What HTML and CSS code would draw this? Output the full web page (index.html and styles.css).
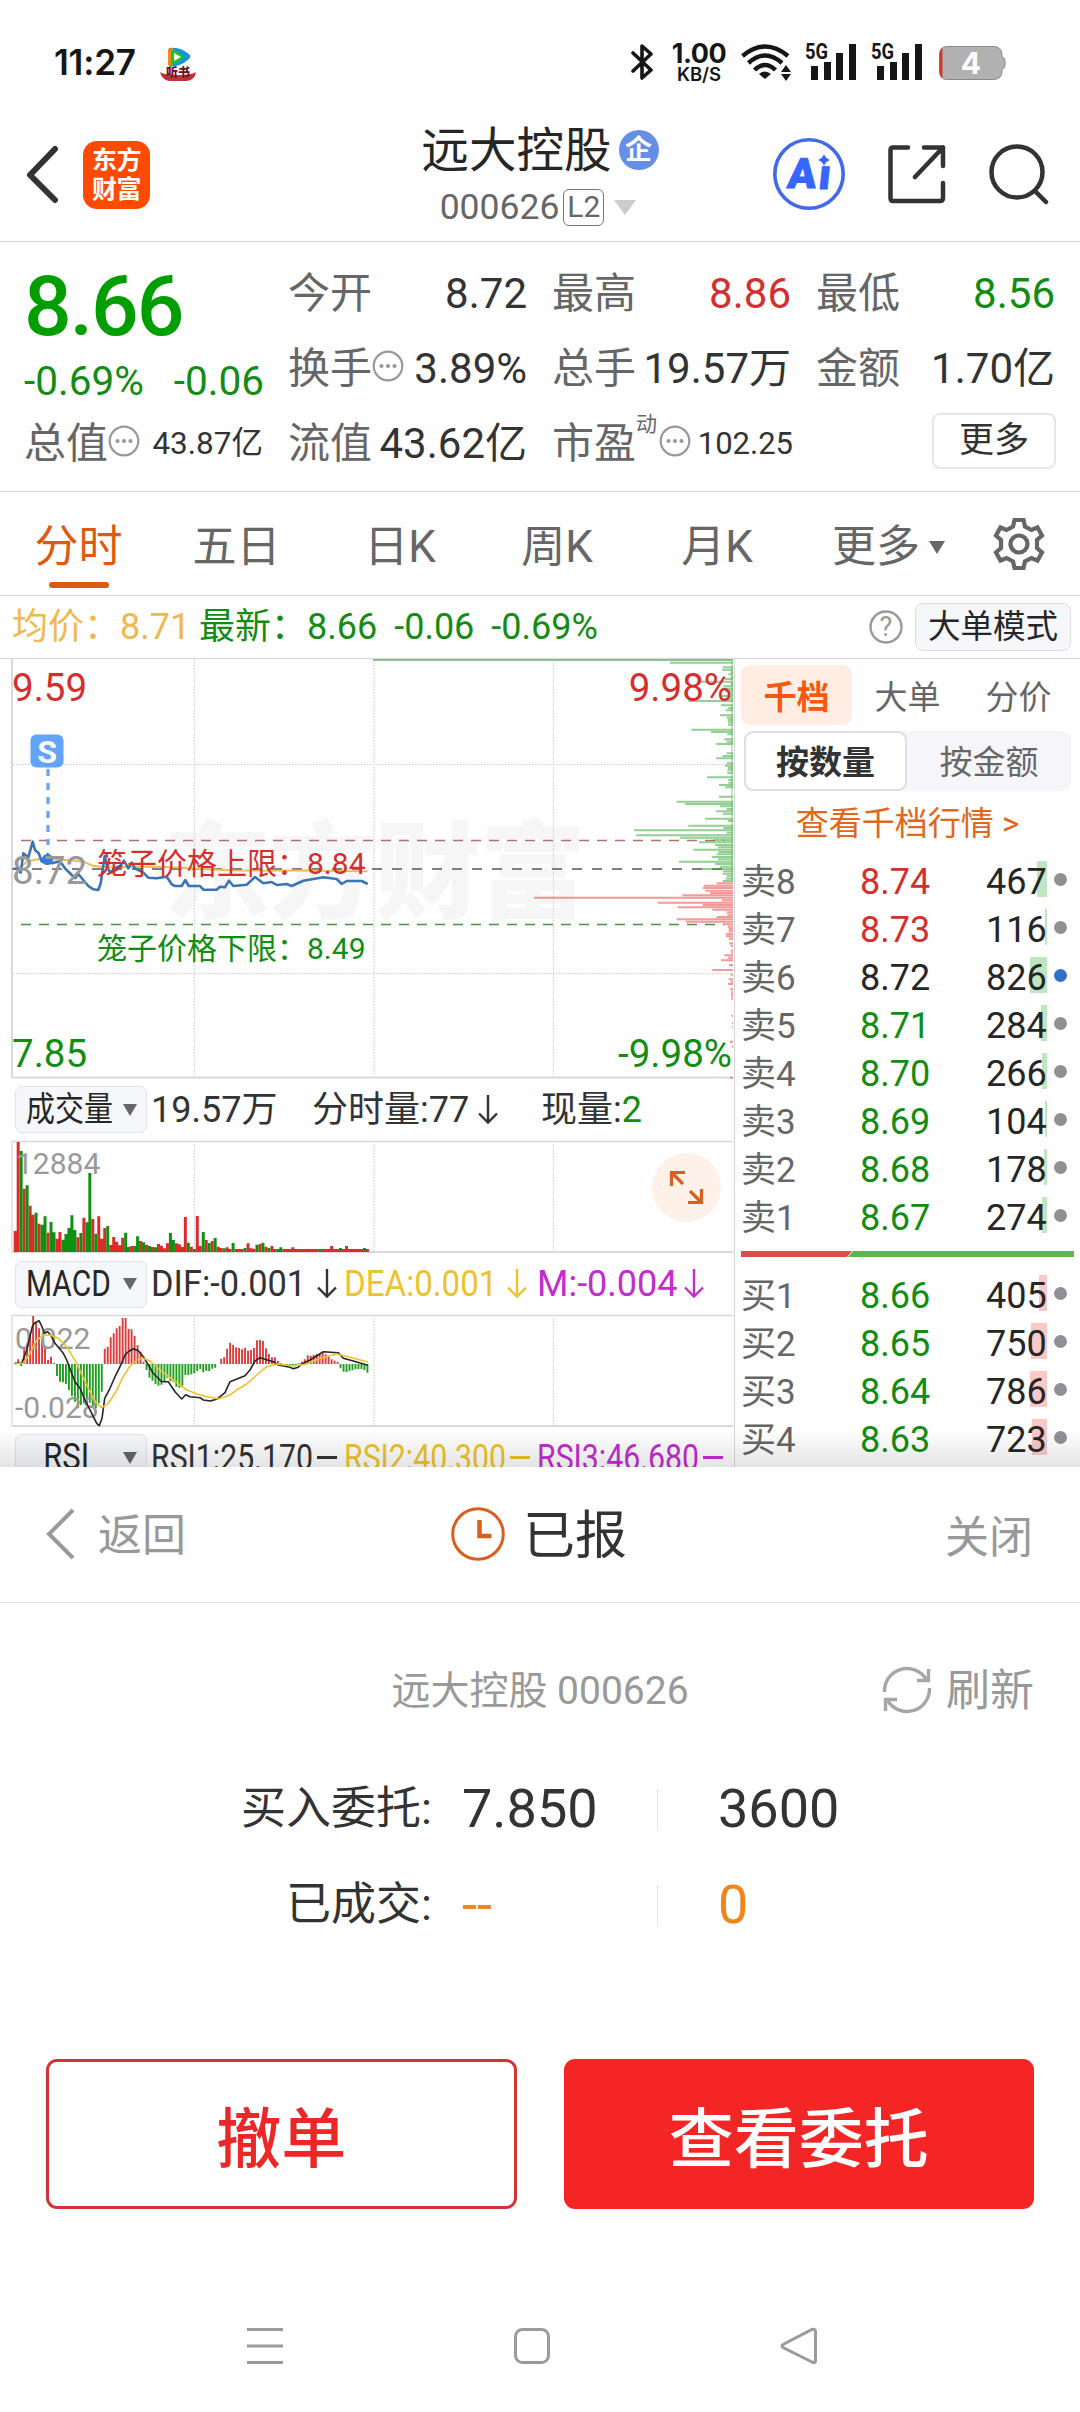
FILE: index.html
```
<!DOCTYPE html>
<html lang="zh-CN">
<head>
  <meta charset="UTF-8">
  <meta name="viewport" content="width=device-width, initial-scale=1.0">
  <title>远大控股 000626</title>
  <link rel="stylesheet" href="styles.css">
</head>
<body>

  <!-- 状态栏 -->
  <div class="status">
    <span class="clock">11:27</span>
    <svg class="notice" width="36" height="36" viewBox="0 0 36 36">
      <path d="M9 2 Q20 0 30 9 Q31 11 29 13 Q20 21 9 21 Z" fill="#1596dc"/>
      <path d="M8 3 L13 2 V20 L8 19 Z" fill="#f08c1a"/>
      <path d="M11 4 Q18 4 24 11 Q18 17 11 19 Z" fill="#19c61f"/>
      <path d="M14 7 L21 11 L14 15 Z" fill="#fff"/>
      <path d="M0 26 Q3 29 18 29 Q33 29 36 26 Q35 34 27 35 H9 Q2 34 0 26 Z" fill="#b8343a"/>
      <text x="18" y="31" text-anchor="middle" class="notice-text">听书</text>
    </svg>
    <div class="status-right">
      <svg width="22" height="38" viewBox="0 0 22 38" fill="none" stroke="#161616" stroke-width="3.6" stroke-linejoin="round" stroke-linecap="round">
        <path d="M2 10 L20 27 L11 35 V3 L20 11 L2 28"/>
      </svg>
      <div class="speed"><b>1.00</b><i>KB/S</i></div>
      <svg class="wifi" width="50" height="38" viewBox="0 0 50 38" fill="none" stroke="#161616" stroke-width="4.4">
        <path d="M1.500 13 Q24 -6 47 13"/>
        <path d="M7.500 20 Q24 5 41 20"/>
        <path d="M13.500 27 Q24 17 34.500 27"/>
        <path d="M18 31 Q24 26 30 31 L24 36 Z" fill="#161616" stroke="none"/>
        <path d="M40 29 L45 22 L50 29 Z M40 31 L45 38 L50 31 Z" fill="#161616" stroke="none"/>
      </svg>
      <svg class="signal" width="52" height="37" viewBox="0 0 52 37">
        <text x="0" y="16" class="sig-text" textLength="23" lengthAdjust="spacingAndGlyphs">5G</text>
        <path d="M6 23h7v14h-7z M19 19h7v18h-7z M31 10h7v27h-7z M44 1h7v36h-7z"/>
      </svg>
      <svg class="signal" width="52" height="37" viewBox="0 0 52 37">
        <text x="0" y="16" class="sig-text" textLength="23" lengthAdjust="spacingAndGlyphs">5G</text>
        <path d="M6 23h7v14h-7z M19 19h7v18h-7z M31 10h7v27h-7z M44 1h7v36h-7z"/>
      </svg>
      <svg class="battery" width="67" height="34" viewBox="0 0 67 34">
        <path d="M8 .5 H54 Q63 .5 63 9 V11 Q66 12 66 14 V20 Q66 22 63 23 V25 Q63 33.500 54 33.500 H8 Q.5 33.500 .5 25 V9 Q.5 .5 8 .5 Z" fill="#b1b1b1" stroke="#8a8a8a"/>
        <path d="M3.500 2 V32 Q.5 30 .5 25 V9 Q.5 4 3.500 2 Z" fill="#d0392f"/>
        <text x="32" y="28" text-anchor="middle" class="bat-text">4</text>
      </svg>
    </div>
  </div>

  <!-- 标题 -->
  <header class="header">
    <div class="header-left">
      <svg width="34" height="62" viewBox="0 0 34 62" fill="none" stroke="#333" stroke-width="6" stroke-linecap="round" stroke-linejoin="round">
        <path d="M31 5 L6 31 L31 56"/>
      </svg>
      <div class="logo"><span>东方</span><span>财富</span></div>
    </div>
    <div class="title">
      <div class="name">远大控股<span class="ent">企</span></div>
      <div class="code">000626<span class="l2">L2</span><i class="tri-light"></i></div>
    </div>
    <div class="header-right">
      <svg width="72" height="74" viewBox="0 0 72 74">
        <circle cx="36" cy="37" r="34.200" fill="none" stroke="#4169ea" stroke-width="3.600"/>
        <text transform="translate(13.500 50.500) skewX(-6)" class="ai-text">A</text>
        <text transform="translate(44.500 52) skewX(-6)" class="ai-text">ı</text>
        <path d="M51 17 Q52.500 21.500 57 23 Q52.500 24.500 51 29 Q49.500 24.500 45 23 Q49.500 21.500 51 17Z" fill="#3566ff"/>
      </svg>
      <svg width="58" height="60" viewBox="0 0 58 60" fill="none" stroke="#333" stroke-width="4.500" stroke-linecap="round" stroke-linejoin="round">
        <path d="M20 3.500 H5 Q2.500 3.500 2.500 6 V54 Q2.500 57 5 57 H52 Q55 57 55 54 V39"/>
        <path d="M36 3.500 H55 V22 M55 3.500 L27 33"/>
      </svg>
      <svg width="60" height="62" viewBox="0 0 60 62" fill="none" stroke="#333" stroke-width="4.500" stroke-linecap="round">
        <circle cx="28" cy="29" r="25.500"/>
        <path d="M46 48 L57 59"/>
      </svg>
    </div>
  </header>

  <!-- 行情 -->
  <section class="quote">
    <div class="col">
      <div class="last">8.66</div>
      <div class="change"><span>-0.69%</span><span>-0.06</span></div>
      <div class="cell small"><label>总值</label><svg class="dots" viewBox="0 0 32 32"><use href="#dots"/></svg><em>43.87亿</em></div>
    </div>
    <div class="col">
      <div class="cell"><label>今开</label><em>8.72</em></div>
      <div class="cell"><label>换手</label><svg class="dots" viewBox="0 0 32 32"><use href="#dots"/></svg><em>3.89%</em></div>
      <div class="cell"><label>流值</label><em>43.62亿</em></div>
    </div>
    <div class="col">
      <div class="cell"><label>最高</label><em class="red">8.86</em></div>
      <div class="cell"><label>总手</label><em>19.57万</em></div>
      <div class="cell small pe"><label>市盈</label><sup>动</sup><svg class="dots" viewBox="0 0 32 32"><use href="#dots"/></svg><em>102.25</em></div>
    </div>
    <div class="col">
      <div class="cell"><label>最低</label><em class="green">8.56</em></div>
      <div class="cell"><label>金额</label><em>1.70亿</em></div>
      <div class="cell"><button class="more">更多</button></div>
    </div>
  </section>

  <!-- 周期 -->
  <nav class="tabs">
    <a class="active">分时</a>
    <a>五日</a>
    <a>日K</a>
    <a>周K</a>
    <a>月K</a>
    <a class="tab-more">更多<i class="tri-small"></i></a>
    <svg class="gear" width="54" height="56" viewBox="0 0 54 56" fill="none" stroke="#666" stroke-width="4.200">
      <path d="M22.500 4 H31.500 L33 10.500 L39.500 14 L45.500 11.500 L50 19.500 L45 24 V32 L50 36.500 L45.500 44.500 L39.500 42 L33 45.500 L31.500 52 H22.500 L21 45.500 L14.500 42 L8.500 44.500 L4 36.500 L9 32 V24 L4 19.500 L8.500 11.500 L14.500 14 L21 10.500 Z"/>
      <circle cx="27" cy="28" r="8.500"/>
    </svg>
  </nav>

  <div class="info">
    <span class="avg">均价：8.71</span>
    <span class="newest">最新：8.66</span>
    <span class="newest">-0.06</span>
    <span class="newest">-0.69%</span>
    <svg class="help" width="34" height="34" viewBox="0 0 34 34">
      <circle cx="17" cy="17" r="15.500" fill="none" stroke="#999" stroke-width="2.400"/>
      <text x="17" y="26" text-anchor="middle" class="help-text">?</text>
    </svg>
    <button class="big-mode">大单模式</button>
  </div>

  <main class="main">
    <div class="charts">
      <svg id="price" width="734" height="420" viewBox="0 659 734 420">
        <text x="164" y="910" class="mark" textLength="422">东方财富</text>
        <g class="grid">
          <path d="M194.500 659V1077 M553.500 659V1077 M13 764.500H733 M13 973.500H733"/>
          <path d="M374 659V1077"/>
        </g>
        <path class="frame" d="M12 659V1078"/>
        <path class="frame" d="M12 1077.500H733"/>
        <path d="M21 840.500H724" class="cage up"/>
        <path d="M21 924.500H724" class="cage down"/>
        <path d="M12 869H733" class="mid"/>
        <g id="depth"></g>
        <path d="M373 660H733" stroke="#8cc08f" stroke-width="2"/>
        <path d="M48 769V845" class="mark-line"/>
        <polyline id="avgLine" class="line avg-line"/>
        <polyline id="priceLine" class="line price-line"/>
        <circle cx="47.500" cy="859.500" r="5.500" fill="#2f7de6"/>
        <rect x="30.500" y="734.500" width="33" height="33" rx="6" fill="#63a4fb"/>
        <text x="47" y="763" text-anchor="middle" class="s-text">S</text>
        <text x="12" y="700.500" class="axis red">9.59</text>
        <text x="732" y="700.500" class="axis red" text-anchor="end">9.98%</text>
        <text x="12" y="883.500" class="axis gray">8.72</text>
        <text x="12" y="1066.500" class="axis green">7.85</text>
        <text x="732" y="1066.500" class="axis green" text-anchor="end">-9.98%</text>
        <text x="97" y="874" class="cage-text red">笼子价格上限：8.84</text>
        <text x="97" y="959" class="cage-text green">笼子价格下限：8.49</text>
      </svg>

      <div class="ind">
        <span class="pick"><b class="narrow">成交量</b><i class="tri"></i></span>
        <span class="vol-total">19.57万</span>
        <span class="item vol-min"><u>分时量:77</u><svg class="arrow" viewBox="0 0 20 30"><use href="#down"/></svg></span>
        <span>现量:<span class="green">2</span></span>
      </div>
      <svg id="volume" width="734" height="114" viewBox="0 1140 734 114">
        <g class="grid">
          <path d="M194.500 1141V1252 M553.500 1141V1252"/>
          <path d="M374 1141V1252"/>
        </g>
        <path class="frame thin" d="M12 1252V1141.500H733"/>
        <path class="frame" d="M12 1252H733"/>
        <g id="volBars"></g>
        <text x="16" y="1173.500" class="axis-small">12884</text>
        <circle cx="686.500" cy="1187.500" r="34.500" fill="#fdf1ea"/>
        <path d="M671.500 1186V1172.500H685 M671.500 1172.500L683 1184 M701.500 1189V1202.500H688 M701.500 1202.500L690 1191" fill="none" stroke="#d8601d" stroke-width="3.200"/>
      </svg>

      <div class="ind">
        <span class="pick"><b class="macd">MACD</b><i class="tri"></i></span>
        <span class="item"><u class="w95">DIF:-0.001</u><svg class="arrow" viewBox="0 0 20 30"><use href="#down"/></svg></span>
        <span class="item yellow dea"><u class="w92">DEA:0.001</u><svg class="arrow" viewBox="0 0 20 30"><use href="#down"/></svg></span>
        <span class="item purple m"><u>M:-0.004</u><svg class="arrow" viewBox="0 0 20 30"><use href="#down"/></svg></span>
      </div>
      <svg id="macd" width="734" height="113" viewBox="0 1314 734 113">
        <g class="grid">
          <path d="M194.500 1315V1425 M553.500 1315V1425"/>
          <path d="M374 1315V1425"/>
        </g>
        <path class="frame thin" d="M12 1426V1315.500H733"/>
        <path class="frame" d="M12 1426H733"/>
        <g id="macdBars"></g>
        <text x="15" y="1348.500" class="axis-small">0.022</text>
        <text x="15" y="1417.500" class="axis-small">-0.028</text>
        <polyline id="dif" class="line thin-line" stroke="#262626"/>
        <polyline id="dea" class="line thin-line" stroke="#ecc32f"/>
      </svg>

      <div class="ind">
        <span class="pick"><b class="rsi">RSI</b><i class="tri"></i></span>
        <span class="item"><u class="w84">RSI1:25.170</u><i class="flat"></i></span>
        <span class="item yellow"><u class="w84">RSI2:40.300</u><i class="flat"></i></span>
        <span class="item purple"><u class="w84">RSI3:46.680</u><i class="flat"></i></span>
      </div>
    </div>

    <!-- 盘口 -->
    <aside class="book">
      <div class="book-tabs"><b>千档</b><span>大单</span><span>分价</span></div>
      <div class="seg"><b>按数量</b><span>按金额</span></div>
      <div class="link">查看千档行情 &gt;</div>
      <div class="rows sell">
        <div class="row"><span>卖8</span><em class="red">8.74</em><strong><i style="width:10px"></i>467</strong><s></s></div>
        <div class="row"><span>卖7</span><em class="red">8.73</em><strong><i style="width:2px"></i>116</strong><s></s></div>
        <div class="row"><span>卖6</span><em>8.72</em><strong><i style="width:17px"></i>826</strong><s class="blue"></s></div>
        <div class="row"><span>卖5</span><em class="green">8.71</em><strong><i style="width:6px"></i>284</strong><s></s></div>
        <div class="row"><span>卖4</span><em class="green">8.70</em><strong><i style="width:5px"></i>266</strong><s></s></div>
        <div class="row"><span>卖3</span><em class="green">8.69</em><strong><i style="width:2px"></i>104</strong><s></s></div>
        <div class="row"><span>卖2</span><em class="green">8.68</em><strong><i style="width:3px"></i>178</strong><s></s></div>
        <div class="row"><span>卖1</span><em class="green">8.67</em><strong><i style="width:5px"></i>274</strong><s></s></div>
      </div>
      <svg class="ratio" width="333" height="6" viewBox="0 0 333 6">
        <path d="M0 0H111L106 6H0Z" fill="#dc4d4a"/>
        <path d="M112 0H333V6H107Z" fill="#5db54b"/>
      </svg>
      <div class="rows buy">
        <div class="row"><span>买1</span><em class="green">8.66</em><strong><i style="width:8px"></i>405</strong><s></s></div>
        <div class="row"><span>买2</span><em class="green">8.65</em><strong><i style="width:16px"></i>750</strong><s></s></div>
        <div class="row"><span>买3</span><em class="green">8.64</em><strong><i style="width:17px"></i>786</strong><s></s></div>
        <div class="row"><span>买4</span><em class="green">8.63</em><strong><i style="width:15px"></i>723</strong><s></s></div>
      </div>
    </aside>
    <div class="fade"></div>
  </main>

  <!-- 委托结果 -->
  <section class="sheet">
    <div class="sheet-head">
      <span class="back">
        <svg width="30" height="52" viewBox="0 0 30 52" fill="none" stroke="#999" stroke-width="4"><path d="M28 2 L4 26 L28 50"/></svg>返回
      </span>
      <span class="state">
        <svg width="54" height="54" viewBox="0 0 54 54" fill="none" stroke="#d9601c">
          <circle cx="27" cy="27" r="25.300" stroke-width="3"/>
          <path d="M28.500 13V29H40.500" stroke-width="4.500"/>
        </svg>已报
      </span>
      <span class="close">关闭</span>
    </div>
    <div class="stock">
      <span>远大控股 000626</span>
      <span class="refresh">
        <svg width="50" height="50" viewBox="0 0 50 50" fill="none" stroke="#a6a6a6" stroke-width="3.400">
          <path d="M2.500 27 A22.500 22.500 0 0 1 44 14 M47.500 23 A22.500 22.500 0 0 1 6 36"/>
          <path d="M46.500 4V15.500H35 M3.500 46V34.500H15"/>
        </svg>刷新
      </span>
    </div>
    <div class="deal"><label>买入委托:</label><span class="d-price">7.850</span><span class="d-qty">3600</span></div>
    <div class="deal orange"><label>已成交:</label><span class="d-price">--</span><span class="d-qty">0</span></div>
    <div class="actions">
      <button class="cancel">撤单</button>
      <button class="view">查看委托</button>
    </div>
  </section>

  <!-- 系统导航 -->
  <div class="navbar">
    <svg width="36" height="38" viewBox="0 0 36 38"><path d="M0 2.500H36 M0 19H36 M0 35.500H36"/></svg>
    <svg width="36" height="38" viewBox="0 0 36 38"><rect x="1.500" y="2.500" width="33" height="33" rx="7"/></svg>
    <svg width="38" height="38" viewBox="0 0 38 38"><path d="M3 17.500 L32 2.500 Q35.500 1.500 35.500 4.500 V33.500 Q35.500 36.500 32 35 L3 20.500 Q1 19 3 17.500Z"/></svg>
  </div>

  <svg class="defs" width="0" height="0">
    <symbol id="dots" viewBox="0 0 32 32">
      <circle cx="16" cy="16" r="14.300" fill="none" stroke="#999" stroke-width="2.200"/>
      <circle cx="9.500" cy="16" r="2.100" fill="#999"/><circle cx="16" cy="16" r="2.100" fill="#999"/><circle cx="22.500" cy="16" r="2.100" fill="#999"/>
    </symbol>
    <symbol id="down" viewBox="0 0 20 30">
      <path d="M10 0V27 M1 18.500L10 27.500L19 18.500" fill="none" stroke="currentColor" stroke-width="2.400"/>
    </symbol>
  </svg>

  <script src="script.js"></script>
</body>
</html>
```

FILE: styles.css
```
* { box-sizing: border-box; }
body {
  margin: 0;
  width: 1080px;
  height: 2412px;
  overflow: hidden;
  background: #fefefe;
  color: #333;
  font-family: Roboto, "Noto Sans CJK SC", sans-serif;
}
em, i, s, u { font-style: normal; text-decoration: none; }
button { font-family: inherit; padding: 0; }
svg { display: block; flex: none; }
text { white-space: pre; }
.red { color: #d32f2f; fill: #d32f2f; }
.green { color: #128c12; fill: #128c12; }
.gray { fill: #999; }
.yellow { color: #ecc32f; }
.purple { color: #c32ccf; }
.defs { position: absolute; }

/* 状态栏 */
.status {
  height: 108px;
  padding: 43px 74px 0 54px;
  display: flex;
  align-items: flex-start;
}
.clock {
  font-family: Inter, sans-serif;
  font-size: 35px;
  line-height: 38px;
  font-weight: 600;
  letter-spacing: -0.2px;
  color: #161616;
  width: 106px;
}
.notice { margin-top: 3px; }
.notice-text { font-size: 12px; font-weight: 900; fill: #6d1218; }
.status-right { margin-left: auto; display: flex; }
.speed {
  width: 56px;
  margin-left: 18px;
  display: flex;
  flex-direction: column;
  align-items: center;
  font-family: Inter, sans-serif;
  color: #161616;
}
.speed b { font-size: 27px; line-height: 22px; letter-spacing: -0.5px; font-weight: 700; }
.speed i { font-size: 18.500px; line-height: 18px; font-weight: 600; }
.wifi { margin-left: 14px; }
.signal { margin-left: 14px; fill: #161616; overflow: visible; }
.sig-text { font-size: 22px; font-weight: 700; }
.battery { margin-left: 16px; margin-top: 3px; }
.bat-text { font-family: Inter, sans-serif; font-size: 30px; font-weight: 700; fill: #fff; }

/* 标题 */
.header {
  height: 134px;
  border-bottom: 1px solid #d6d6d6;
  display: grid;
  grid-template-columns: 1fr auto 1fr;
  align-items: center;
}
.header-left { display: flex; align-items: center; padding-left: 24px; gap: 25px; }
.logo {
  width: 67px;
  height: 68px;
  border-radius: 14px;
  background: #ff4a00;
  color: #fff;
  font-size: 25px;
  line-height: 29px;
  font-weight: 700;
  letter-spacing: -0.5px;
  display: flex;
  flex-direction: column;
  align-items: center;
  padding-top: 5px;
}
.title { display: flex; flex-direction: column; align-items: center; padding-top: 10px; }
.name { display: flex; align-items: center; font-size: 47.500px; line-height: 56px; color: #262626; }
.ent {
  width: 40px;
  height: 40px;
  margin-left: 7px;
  margin-top: -2px;
  border-radius: 50%;
  background: #658fe6;
  color: #fff;
  font-size: 27px;
  line-height: 40px;
  font-weight: 700;
  text-align: center;
}
.code { display: flex; align-items: center; margin-right: 4px; font-size: 35.500px; line-height: 57px; color: #666; }
.l2 {
  width: 41px;
  height: 37px;
  margin-left: 4px;
  border: 1.500px solid #777;
  border-radius: 6px;
  font-size: 30px;
  line-height: 34px;
  text-align: center;
}
.tri-light {
  margin-left: 10px;
  border: 11px solid transparent;
  border-top: 15px solid #ccc;
  border-bottom: 0;
}
.header-right { display: flex; align-items: center; justify-content: flex-end; gap: 43px; padding-right: 31px; margin-top: -1px; }
.ai-text { font-size: 42px; font-weight: 900; fill: #3566ff; stroke: #3566ff; stroke-width: 1; }

/* 行情 */
.quote {
  height: 250px;
  padding: 14px 25px 0;
  display: grid;
  grid-template-columns: repeat(4, 238px);
  gap: 26px;
  border-bottom: 1px solid #d6d6d6;
}
.last { font-size: 84px; line-height: 101px; height: 102px; font-weight: 500; color: #009e00; letter-spacing: -2px; margin-left: -1px; }
.change {
  height: 48px;
  display: flex;
  justify-content: space-between;
  font-size: 40.500px;
  line-height: 46px;
  color: #128c12;
  margin: 0 -1px;
}
.cell { height: 75px; display: flex; align-items: center; font-size: 42px; line-height: 75px; white-space: nowrap; }
.cell label { margin-left: -1px; color: #666; }
.cell em { margin-left: auto; }
.small em { font-size: 31.500px; }
.pe em { font-size: 31px; margin-right: -2px; }
.cell sup { width: 23px; font-size: 21px; line-height: 20px; margin-top: -40px; color: #666; }
.dots { width: 32px; height: 32px; margin-top: -6px; }
.more {
  width: 124px;
  height: 56px;
  margin: -5px -1px 0 auto;
  border: 2px solid #e6e6e6;
  border-radius: 8px;
  background: #fff;
  color: #333;
  font-size: 35px;
  line-height: 52px;
}

/* 周期 */
.tabs {
  height: 104px;
  padding-right: 34px;
  display: grid;
  grid-template-columns: 157px 159px 168px 146px 174px 1fr auto;
  align-items: center;
  border-bottom: 1px solid #d6d6d6;
  font-size: 44px;
  line-height: 104px;
  color: #666;
  text-align: center;
}
.tabs a { padding-top: 3px; }
.tabs .active { position: relative; color: #dc5a12; }
.active::after {
  content: "";
  position: absolute;
  left: 49px;
  bottom: 11px;
  width: 60px;
  height: 6px;
  border-radius: 3px;
  background: #dc5a12;
}
.tab-more { display: flex; align-items: center; padding-left: 28px; }
.tri-small {
  margin-left: 9px;
  border: 8px solid transparent;
  border-top: 13px solid #666;
  border-bottom: 0;
}
.gear { margin-top: -3px; }

.info {
  height: 63px;
  padding: 0 9px 0 12px;
  display: flex;
  align-items: center;
  border-bottom: 1px solid #d6d6d6;
  font-size: 36px;
  line-height: 64px;
}
.avg { width: 187px; color: #efb851; }
.newest { color: #128c12; margin-right: 17px; }
.help { margin-left: auto; margin-right: 12px; }
.help-text { font-size: 27px; fill: #999; }
.big-mode {
  width: 156px;
  height: 48px;
  border: 1px solid #dcdde2;
  border-radius: 8px;
  background: #f6f7fb;
  color: #262626;
  font-size: 32.500px;
  line-height: 46px;
}

/* 图表 */
.main { position: relative; height: 808px; overflow: hidden; display: flex; }
.charts { width: 735px; flex: none; border-right: 1px solid #d6d6d6; }
.mark { font-size: 106px; font-weight: 900; fill: #f6f6f6; }
.grid path { fill: none; stroke: #ccc; stroke-width: 1; stroke-dasharray: 1.500 1.500; }
.grid path + path { stroke: #e2e2e2; stroke-width: 2; }
.frame { fill: none; stroke: #d9d9d9; stroke-width: 2; }
.thin { stroke-width: 1.300; }
.cage { stroke-width: 1.400; stroke-dasharray: 10 8; }
.up { stroke: #b47070; }
.down { stroke: #4c914c; }
.mid { stroke: #7e7e7e; stroke-width: 2; stroke-dasharray: 10 10; }
.mark-line { stroke: #6aa3f0; stroke-width: 3.300; stroke-dasharray: 7 7; }
.line { fill: none; stroke-linejoin: round; }
.avg-line { stroke: #f3b64c; stroke-width: 1.800; }
.price-line { stroke: #3a74b4; stroke-width: 2.600; }
.thin-line { stroke-width: 1.600; }
.s-text { font-size: 32px; font-weight: 700; fill: #fff; }
.axis { font-size: 38.500px; }
.axis-small { font-size: 30px; fill: #999; }
.cage-text { font-size: 30px; }

.ind {
  height: 61px;
  padding-left: 15px;
  display: flex;
  align-items: center;
  font-size: 36px;
  line-height: 64px;
  white-space: nowrap;
}
#volume + .ind { height: 60px; line-height: 60px; }
#macd + .ind { line-height: 62px; }
.pick {
  width: 132px;
  height: 47px;
  margin-right: 4px;
  padding: 0 9px 0 10px;
  display: flex;
  align-items: center;
  justify-content: space-between;
  border: 1px solid #e1e3ea;
  border-radius: 7px;
  background: #f6f7fb;
  color: #262626;
  line-height: 45px;
}
.pick b { width: 86px; font-weight: 400; transform-origin: left; }
.narrow { font-size: 34.500px; transform: scaleX(.84); line-height: 49px; }
.macd { transform: scaleX(.83); }
.rsi { transform: scaleX(.86); padding-left: 20px; }
.tri {
  border: 7.500px solid transparent;
  border-top: 12px solid #666;
  border-bottom: 0;
}
.vol-total { width: 161px; }
.item { width: 193px; display: flex; align-items: center; }
.item u { width: 166px; transform-origin: left; }
.item.vol-min { width: 229px; }
.item.m u { width: 147px; }
.item.dea u { width: 163px; }
.w95 { transform: scaleX(.955); }
.w92 { transform: scaleX(.92); }
.w84 { transform: scaleX(.84); }
.arrow { width: 20px; height: 30px; }
.flat { width: 20px; height: 2.500px; background: currentColor; }

/* 盘口 */
.book { flex: 1; padding: 6px 6px 0; }
.book-tabs { display: flex; height: 60px; font-size: 33px; line-height: 65px; text-align: center; color: #666; }
.book-tabs b { width: 111px; border-radius: 9px; background: #ffede4; color: #f35a0d; font-weight: 700; }
.book-tabs span { width: 111px; }
.seg {
  width: 327px;
  height: 60px;
  margin: 6px 0 0 3px;
  display: flex;
  border-radius: 9px;
  background: #f6f6fa;
  font-size: 33px;
  line-height: 64px;
  text-align: center;
  color: #666;
}
.seg b { width: 163px; border: 2px solid #dedede; border-radius: 9px; background: #fff; color: #333; line-height: 60px; font-weight: 700; }
.seg span { flex: 1; }
.link { height: 70px; font-size: 33px; line-height: 66px; text-align: center; color: #e2661b; }
.rows { display: flex; flex-direction: column; gap: 12px; }
.row {
  height: 36px;
  display: flex;
  font-size: 36px;
  line-height: 43px;
  color: #262626;
}
.row span { width: 119px; color: #666; font-size: 35px; }
.row em { width: 126px; }
.row strong { position: relative; width: 61px; height: 36px; font-weight: 400; z-index: 0; }
.row strong i { position: absolute; right: 0; top: 0; height: 36px; z-index: -1; }
.sell i { background: #c0e6c1; }
.buy i { background: #fac8c7; }
.row s { width: 13px; height: 13px; margin: 12px 0 0 7px; border-radius: 50%; background: #908f95; }
.row .blue { background: #2f72c4; }
.ratio { margin: 18px 0; }
.fade {
  position: absolute;
  left: 0;
  right: 0;
  bottom: 0;
  height: 36px;
  background: linear-gradient(rgba(0,0,0,0), rgba(0,0,0,0.1));
}

/* 委托结果 */
.sheet { height: 845px; background: #fff; }
.sheet-head {
  height: 136px;
  padding: 0 47px 0 45px;
  display: grid;
  grid-template-columns: 1fr auto 1fr;
  align-items: center;
  border-bottom: 1px solid #e8e8e8;
  font-size: 44px;
  line-height: 135px;
  color: #999;
}
.sheet-head > span { padding-top: 4px; height: 135px; }
.sheet-head svg { margin-top: -6px; }
.back { display: flex; align-items: center; gap: 23px; }
.state { display: flex; align-items: center; gap: 18px; font-size: 52px; line-height: 139px; color: #333; }
.close { text-align: right; }
.stock {
  height: 176px;
  position: relative;
  display: flex;
  align-items: center;
  justify-content: center;
  font-size: 39px;
  line-height: 178px;
  color: #999;
}
.refresh { position: absolute; top: -1px; right: 46px; display: flex; align-items: center; gap: 14px; font-size: 44px; }
.refresh svg { margin-top: -3px; }
.deal { height: 96px; margin-top: -18px; display: flex; align-items: center; font-size: 54px; line-height: 98px; }
.deal + .deal { margin-top: 0; }
.deal label { width: 432px; text-align: right; font-size: 45px; }
.deal span { height: 42px; line-height: 42px; }
.d-price { width: 226px; padding-left: 30px; border-right: 1px solid #e4e4e4; }
.d-qty { padding-left: 60px; }
.orange span { color: #ef861c; }
.actions { display: flex; gap: 47px; padding: 0 46px; margin-top: 106px; }
.actions button { width: 50%; height: 150px; border-radius: 11px; font-size: 65px; font-weight: 500; }
.cancel { border: 3px solid #d23434; background: #fff; color: #ec2727; }
.view { border: 0; background: #f42525; color: #fff; }

.navbar { height: 100px; display: flex; padding: 15px 262px 0 247px; justify-content: space-between; }
.navbar svg { fill: none; stroke: #9b9b9b; stroke-width: 3; }
```

FILE: script.js
```
const NS = 'http://www.w3.org/2000/svg';

function addPath(parent, d, color, width) {
  const p = document.createElementNS(NS, 'path');
  p.setAttribute('d', d);
  p.setAttribute('stroke', color);
  p.setAttribute('stroke-width', width);
  p.setAttribute('fill', 'none');
  document.getElementById(parent).appendChild(p);
}

// points are stored in thirds of a pixel, relative to a base line
function setLine(id, pts, top) {
  const out = pts.trim().split(' ').map(p => {
    const [x, y] = p.split(',').map(Number);
    return (x / 3).toFixed(1) + ',' + (top + y / 3).toFixed(1);
  });
  document.getElementById(id).setAttribute('points', out.join(' '));
}

setLine('priceLine', '40,657 55,655 62,668 70,610 85,622 98,575 105,600 116,610 125,634 138,640 143,612 155,640 180,634 195,655 215,675 226,684 235,672 250,690 265,708 280,718 295,720 302,700 308,660 314,618 322,650 330,668 345,655 360,648 372,632 385,655 395,638 405,655 430,668 445,683 470,685 500,680 515,703 525,708 545,708 556,690 566,708 600,708 610,719 650,719 660,710 675,712 687,692 700,708 740,704 765,681 790,700 815,696 830,705 860,702 875,708 910,692 970,682 1010,687 1025,702 1040,693 1085,693 1103,702', 650);
setLine('avgLine', '40,657 60,655 80,635 110,628 150,627 200,630 250,635 280,648 330,652 450,650 520,652 600,657 700,661 800,662 900,661 1103,664', 650);
setLine('dif', '45,850 65,850 80,810 97,740 103,730 117,722 125,738 133,760 143,755 152,765 165,790 180,808 190,820 200,840 215,880 225,905 240,925 255,960 275,1000 290,1030 298,1037 306,1015 314,955 330,925 345,890 360,860 375,825 385,815 400,806 415,812 430,830 445,855 460,880 485,905 505,905 525,935 545,957 557,944 570,950 600,953 610,960 630,963 650,958 675,938 690,905 735,887 750,870 765,843 780,833 820,845 835,855 870,862 880,866 895,862 905,852 930,840 970,815 1015,818 1030,835 1060,843 1103,856', 1080);
setLine('dea', '45,852 70,850 90,820 110,780 130,766 150,765 175,775 200,800 230,850 260,915 285,965 305,983 325,970 345,940 370,890 390,858 410,840 430,835 450,843 480,870 520,900 560,930 600,945 655,957 690,945 710,930 740,912 770,885 800,860 830,852 880,858 920,852 960,835 1010,822 1050,832 1103,846', 1080);

// order depth: [level, start]
const asks = [[38,930],[52,1088],[59,1086],[66,1112],[73,1105],[80,1112],[87,1095],[95,1020],[102,1112],[109,1090],[116,1085],[124,1095],[131,1105],[138,1085],[146,1095],[153,985],[166,1083],[174,1105],[181,1097],[196,1080],[203,1100],[210,1103],[217,1104],[224,1104],[239,994],[246,1053],[253,1102],[268,1093],[275,1100],[282,1068],[310,1100],[318,1088],[325,1068],[340,1100],[347,1095],[354,1104],[361,1102],[369,1102],[382,1041],[390,1105],[398,1105],[405,1077],[412,1095],[440,1077],[455,950],[462,975],[469,1080],[477,1100],[484,1068],[491,1088],[506,1035],[513,1103],[527,985],[534,1090],[541,822],[548,1100],[556,828],[563,960],[570,1060],[577,1017],[585,1065],[592,1075],[599,1000],[606,1075],[613,1070],[621,1055],[628,1075],[635,957],[642,1065],[650,1080],[657,1022],[664,1088],[671,1088],[679,1100],[686,1097],[693,1088]];
const bids = [[700,1070],[707,1032],[714,1028],[722,1036],[729,1050],[736,967],[743,522],[751,1085],[758,893],[765,1028],[772,953],[779,1057],[787,1100],[794,1102],[801,1070],[808,950],[815,978],[823,1090],[830,1103],[837,1106],[844,1106],[852,1098],[859,1098],[866,1107],[880,1107],[887,1111],[902,1112],[909,1114],[916,1093],[923,1104],[931,1083],[945,1107],[960,1057],[974,1112],[988,1106],[995,1112],[1002,1104],[1017,1111],[1025,1114],[1032,1113],[1039,1113],[1046,1114],[1097,1114],[1118,1116],[1132,1116],[1175,1109],[1190,1115],[1283,1110]];
const depthPath = list => list.map(([y, x]) => `M${(360 + x / 3).toFixed(1)} ${(650 + y / 3).toFixed(1)}H733`).join('');
addPath('depth', 'M732 659V881', '#a9dba9', 1.4);
addPath('depth', depthPath(asks), 'rgba(50,165,50,0.52)', 1.9);
addPath('depth', depthPath(bids), 'rgba(232,80,80,0.58)', 1.9);

// volume per minute, sign = direction
const vol = '453 186 -213 326 -316 377 404 -398 431 -434 -409 458 -426 -457 476 456 -479 -462 -444 -406 -450 472 -459 413 -427 -279 417 -461 409 476 444 -438 495 471 485 496 473 -458 -501 498 -498 -469 483 -487 494 -498 501 -502 492 497 505 490 -459 -480 490 493 501 411 -488 500 -507 408 498 -456 480 -489 483 -474 500 504 -505 502 507 -489 507 507 507 -504 490 505 506 -494 492 -488 500 -504 498 507 -507 -502 507 507 507 502 507 507 507 507 507 507 507 507 -507 507 507 507 498 507 507 -504 507 498 507 507 507 507 507 -504 507'.split(' ').map(Number);
let up = '', down = '';
vol.forEach((v, i) => {
  const d = `M${(15.2 + i * 2.985).toFixed(2)} 1252V${(1080 + Math.abs(v) / 3).toFixed(1)}`;
  if (v > 0) up += d; else down += d;
});
addPath('volBars', up, '#dd2a2a', 2.985);
addPath('volBars', down, '#109010', 2.985);

const macd = [848,838,858,805,790,770,708,728,745,780,800,840,830,849,888,905,907,912,930,948,965,985,975,970,972,968,980,985,970,935,806,800,772,760,745,738,714,714,747,748,768,795,815,845,870,893,902,912,917,914,903,893,903,905,920,923,917,885,885,883,880,873,867,877,872,873,866,863,852,836,832,806,788,795,802,804,808,804,812,810,804,781,780,783,805,822,832,832,843,850,856,857,857,857,856,850,845,838,826,828,825,823,822,820,823,830,838,842,845,865,875,876,873,871,868,867,867,870,878];
up = ''; down = '';
macd.forEach((v, i) => {
  const d = `M${(15.2 + i * 2.985).toFixed(2)} 1364V${(1080 + v / 3).toFixed(1)}`;
  if (v < 852) up += d; else down += d;
});
addPath('macdBars', up, '#dd3c3c', 1.9);
addPath('macdBars', down, '#1f9f1f', 1.9);
```
